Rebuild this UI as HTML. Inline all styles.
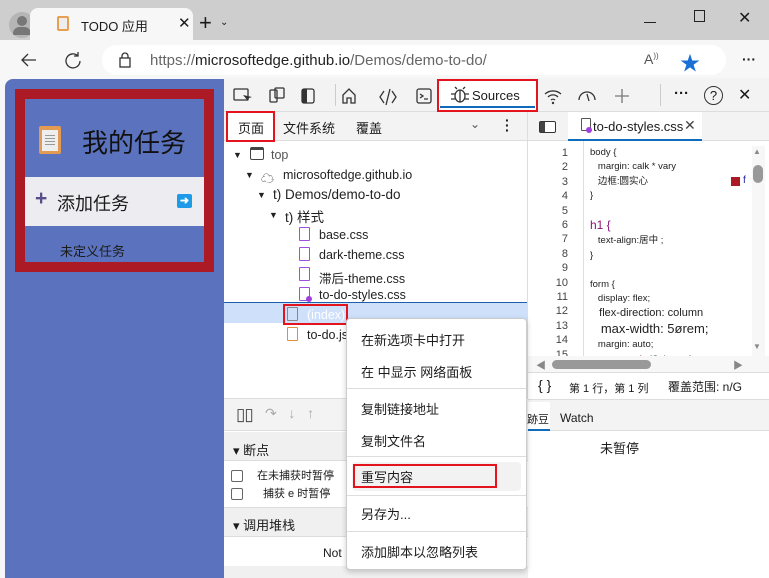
<!DOCTYPE html>
<html><head><meta charset="utf-8"><style>
*{margin:0;padding:0;box-sizing:border-box}
body{width:769px;height:578px;overflow:hidden;background:#f7f7f7;font-family:"Liberation Sans","Noto Sans CJK SC",sans-serif;position:relative;font-size:12px;color:#1b1b1b}
.a{position:absolute}
.ic{stroke:#333;fill:none;stroke-width:1.3}
</style></head><body>
<!-- title bar -->
<div class="a" style="left:0;top:0;width:769px;height:40px;background:#cecece"></div>
<div class="a" style="left:9px;top:12px;width:26px;height:26px;border-radius:50%;background:#b5b5b5"></div>
<div class="a" style="left:17px;top:16px;width:10px;height:10px;border-radius:50%;background:#777"></div>
<div class="a" style="left:13px;top:27px;width:18px;height:8px;border-radius:9px 9px 2px 2px;background:#777"></div>
<div class="a" style="left:30px;top:8px;width:163px;height:34px;background:#f7f7f7;border-radius:8px 8px 0 0"></div>
<div class="a" style="left:57px;top:16px;width:12px;height:15px;background:#e8a050;border-radius:2px"></div>
<div class="a" style="left:59px;top:18px;width:8px;height:11px;background:#eee"></div>
<div class="a" style="left:81px;top:16px;font-size:13px">TODO 应用</div>
<div class="a" style="left:178px;top:14px;font-size:15px">✕</div>
<div class="a" style="left:199px;top:10px;font-size:22px;font-weight:300">+</div>
<div class="a" style="left:220px;top:17px;font-size:10px">⌄</div>
<div class="a" style="left:644px;top:22px;width:12px;height:1.3px;background:#222"></div>
<div class="a" style="left:694px;top:10px;width:11px;height:12px;border:1.3px solid #222"></div>
<div class="a" style="left:738px;top:8px;font-size:16px">✕</div>
<!-- address -->
<svg class="a" style="left:18px;top:50px" width="22" height="20"><path d="M18 10H4M10 4L4 10l6 6" class="ic" stroke-width="1.6"/></svg>
<svg class="a" style="left:63px;top:50px" width="20" height="20"><path d="M15 6A7 7 0 1 0 17 11M15 2v4h-4" class="ic" stroke-width="1.5"/></svg>
<div class="a" style="left:102px;top:45px;width:624px;height:30px;background:#fff;border-radius:15px"></div>
<svg class="a" style="left:118px;top:52px" width="14" height="16"><rect x="2" y="6" width="10" height="9" class="ic"/><path d="M4 6V4a3 3 0 0 1 6 0v2" class="ic"/></svg>
<div class="a" style="left:150px;top:52px;font-size:15px;color:#666">https://<span style="color:#222">microsoftedge.github.io</span>/Demos/demo-to-do/</div>
<div class="a" style="left:644px;top:51px;font-size:14px;color:#555">A<sup style="font-size:8px">))</sup></div>
<div class="a" style="left:680px;top:47px;font-size:20px;color:#1a6fd6">★</div>
<div class="a" style="left:742px;top:51px;font-size:14px;font-weight:bold">···</div>
<!-- left webpage -->
<div class="a" style="left:5px;top:79px;width:219px;height:499px;background:#5b73be;border-radius:8px 0 0 0"></div>
<div class="a" style="left:15px;top:89px;width:199px;height:183px;border:10px solid #ab1a25"></div>
<div class="a" style="left:39px;top:126px;width:22px;height:28px;background:#e39a52;border-radius:2px"></div>
<div class="a" style="left:42px;top:130px;width:16px;height:21px;background:#eee"></div>
<div class="a" style="left:45px;top:135px;width:10px;height:12px;background:repeating-linear-gradient(#999 0 1px,transparent 1px 3px)"></div>
<div class="a" style="left:82px;top:123px;font-size:26px;color:#111">我的任务</div>
<div class="a" style="left:25px;top:177px;width:179px;height:49px;background:#ececf1"></div>
<div class="a" style="left:35px;top:187px;font-size:21px;color:#5a4e8a;font-weight:bold">+</div>
<div class="a" style="left:57px;top:190px;font-size:18px">添加任务</div>
<div class="a" style="left:177px;top:194px;width:15px;height:14px;background:#1d9ae8;border-radius:2px;color:#fff;font-size:11px;line-height:14px;text-align:center;font-weight:bold">➜</div>
<div class="a" style="left:60px;top:241px;font-size:13px">未定义任务</div>
<!-- devtools -->
<div class="a" style="left:224px;top:78px;width:545px;height:500px;background:#fff"></div>
<div class="a" style="left:224px;top:78px;width:545px;height:34px;background:#f3f3f3;border-bottom:1px solid #ddd"></div>
<svg class="a" style="left:232px;top:86px" width="220" height="20">
<rect x="2" y="3" width="14" height="11" rx="1" class="ic"/><path d="M11 9l5 6 1-3 3-1z" fill="#333"/>
<rect x="38" y="4" width="7" height="12" rx="1" class="ic"/><rect x="43" y="2" width="9" height="10" rx="1" class="ic"/>
<rect x="70" y="3" width="12" height="14" rx="2" class="ic"/><rect x="70" y="3" width="5" height="14" fill="#333"/>
<path d="M111 17V9l6-6 6 6v8h-4v-5h-4v5z" class="ic"/>
<path d="M152 5l-4 6 4 6M160 5l4 6-4 6M158 3l-4 16" class="ic"/>
<rect x="185" y="3" width="14" height="14" rx="2" class="ic"/><path d="M188 8l3 2-3 2M192 13h4" class="ic"/>
</svg>
<div class="a" style="left:335px;top:84px;width:1px;height:22px;background:#ccc"></div>
<div class="a" style="left:437px;top:79px;width:101px;height:33px;border:2px solid #e3141d;background:#fff"></div>
<div class="a" style="left:440px;top:106px;width:95px;height:2px;background:#0f6cbd"></div>
<svg class="a" style="left:450px;top:85px" width="20" height="20"><ellipse cx="10" cy="11" rx="5" ry="6" class="ic"/><path d="M5 9H1M5 14H1M15 9h4M15 14h4M7 4l-2-2M13 4l2-2M10 5v12" class="ic"/></svg>
<div class="a" style="left:472px;top:88px;font-size:13px">Sources</div>
<svg class="a" style="left:543px;top:86px" width="90" height="20"><path d="M2 8a12 12 0 0 1 16 0M5 11a7 7 0 0 1 10 0M8 14a3 3 0 0 1 4 0" class="ic"/><circle cx="10" cy="17" r="1.2" fill="#333"/>
<path d="M36 14a8 8 0 0 1 16 0M44 8l2 7" class="ic"/>
<path d="M79 3v14M72 10h14" stroke="#777" stroke-width="1.3"/></svg>
<div class="a" style="left:660px;top:84px;width:1px;height:22px;background:#ccc"></div>
<div class="a" style="left:674px;top:85px;font-size:15px;font-weight:bold">···</div>
<div class="a" style="left:704px;top:86px;width:19px;height:19px;border:1.4px solid #333;border-radius:50%;text-align:center;font-size:13px;line-height:17px">?</div>
<div class="a" style="left:738px;top:85px;font-size:16px">✕</div>
<!-- row 2 -->
<div class="a" style="left:224px;top:112px;width:303px;height:29px;background:#f3f3f3;border-bottom:1px solid #ddd"></div>
<div class="a" style="left:226px;top:111px;width:49px;height:31px;border:2px solid #e3141d;background:#fff"></div>
<div class="a" style="left:238px;top:118px;font-size:13px">页面</div>
<div class="a" style="left:283px;top:118px;font-size:13px">文件系统</div>
<div class="a" style="left:356px;top:118px;font-size:13px">覆盖</div>
<div class="a" style="left:470px;top:117px;font-size:12px;color:#555">⌄</div>
<div class="a" style="left:505px;top:118px;font-size:14px;font-weight:bold;line-height:5px;width:4px">·<br>·<br>·</div>
<div class="a" style="left:527px;top:112px;width:1px;height:290px;background:#ddd"></div>
<div class="a" style="left:528px;top:112px;width:241px;height:29px;background:#f3f3f3;border-bottom:1px solid #ddd"></div>
<div class="a" style="left:539px;top:121px;width:17px;height:12px;border:1.3px solid #333;border-radius:2px;background:linear-gradient(90deg,#444 5px,#fff 5px)"></div>
<div class="a" style="left:568px;top:112px;width:134px;height:29px;background:#fff;border-bottom:2px solid #0f6cbd"></div>
<div class="a" style="left:581px;top:118px;width:10px;height:13px;border:1.2px solid #555;border-radius:1px"></div>
<div class="a" style="left:586px;top:127px;width:6px;height:6px;border-radius:50%;background:#a23ee0"></div>
<div class="a" style="left:593px;top:119px;font-size:13px">to-do-styles.css</div>
<div class="a" style="left:684px;top:117px;font-size:14px;color:#444">✕</div>
<!-- tree -->
<div class="a" style="left:224px;top:302px;width:303px;height:21px;background:#cfe0fb;border-top:1px solid #1b5fa8"></div>
<div style="font-size:12.5px;color:#222">
<div class="a" style="left:233px;top:150px;font-size:9px">▼</div><div class="a" style="left:250px;top:147px;width:14px;height:13px;border:1.3px solid #444;border-top-width:3px;border-radius:2px"></div><div class="a" style="left:271px;top:148px;color:#555">top</div>
<div class="a" style="left:245px;top:170px;font-size:9px">▼</div><div class="a" style="left:261px;top:168px;font-size:13px;color:#444">☁</div><div class="a" style="left:283px;top:168px">microsoftedge.github.io</div>
<div class="a" style="left:257px;top:190px;font-size:9px">▼</div><div class="a" style="left:273px;top:187px;font-size:13.5px">t) Demos/demo-to-do</div>
<div class="a" style="left:269px;top:210px;font-size:9px">▼</div><div class="a" style="left:285px;top:206px;font-size:13.5px">t) 样式</div>
<div class="a" style="left:299px;top:227px;width:11px;height:14px;border:1.3px solid #a04fd9;border-radius:1px"></div><div class="a" style="left:319px;top:228px">base.css</div>
<div class="a" style="left:299px;top:247px;width:11px;height:14px;border:1.3px solid #a04fd9;border-radius:1px"></div><div class="a" style="left:319px;top:248px">dark-theme.css</div>
<div class="a" style="left:299px;top:267px;width:11px;height:14px;border:1.3px solid #a04fd9;border-radius:1px"></div><div class="a" style="left:319px;top:268px">滞后-theme.css</div>
<div class="a" style="left:299px;top:287px;width:11px;height:14px;border:1.3px solid #a04fd9;border-radius:1px"></div><div class="a" style="left:306px;top:296px;width:6px;height:6px;border-radius:50%;background:#a23ee0"></div><div class="a" style="left:319px;top:288px">to-do-styles.css</div>
<div class="a" style="left:283px;top:304px;width:65px;height:21px;border:2px solid #e3141d"></div>
<div class="a" style="left:287px;top:307px;width:11px;height:14px;border:1.3px solid #888;border-radius:1px"></div><div class="a" style="left:307px;top:308px;color:#fff">(index)</div>
<div class="a" style="left:287px;top:327px;width:11px;height:14px;border:1.3px solid #e0903a;border-radius:1px"></div><div class="a" style="left:307px;top:328px">to-do.js</div>
</div>
<!-- debugger -->
<div class="a" style="left:224px;top:398px;width:304px;height:33px;background:#f3f3f3;border-top:1px solid #ddd;border-bottom:1px solid #ddd"></div>
<div class="a" style="left:236px;top:405px;font-size:17px;color:#444;letter-spacing:-1px">▯▯</div>
<div class="a" style="left:265px;top:405px;font-size:14px;color:#aaa">↷ &nbsp; ↓ &nbsp; ↑</div>
<div class="a" style="left:224px;top:432px;width:304px;height:29px;background:#f0f0f0;border-bottom:1px solid #ddd"></div>
<div class="a" style="left:233px;top:440px;font-size:13px">▾ 断点</div>
<div class="a" style="left:231px;top:470px;width:12px;height:12px;border:1px solid #666;border-radius:2px;background:#fff"></div>
<div class="a" style="left:257px;top:467px;font-size:11px">在未捕获时暂停</div>
<div class="a" style="left:231px;top:488px;width:12px;height:12px;border:1px solid #666;border-radius:2px;background:#fff"></div>
<div class="a" style="left:263px;top:485px;font-size:11px">捕获 e 时暂停</div>
<div class="a" style="left:224px;top:507px;width:304px;height:30px;background:#f0f0f0;border-top:1px solid #ddd;border-bottom:1px solid #ddd"></div>
<div class="a" style="left:233px;top:515px;font-size:13px">▾ 调用堆栈</div>
<div class="a" style="left:323px;top:546px;font-size:12px">Not</div>
<div class="a" style="left:224px;top:566px;width:304px;height:12px;background:#f0f0f0"></div>
<!-- editor -->
<div class="a" style="left:528px;top:141px;width:224px;height:215px;overflow:hidden">
<div class="a" style="left:55px;top:0;width:1px;height:215px;background:#dde"></div>
<div class="a" style="left:20px;top:5px;font-size:11px;line-height:14.4px;color:#444;text-align:right;width:20px">1<br>2<br>3<br>4<br>5<br>6<br>7<br>8<br>9<br>10<br>11<br>12<br>13<br>14<br>15</div>
<div class="a" style="left:62px;top:5px;font-size:9.5px;line-height:14.4px;color:#222;white-space:pre">body {
   margin: calk * vary
   边框:圆实心
}

<span style="font-size:12px;color:#881280">h1 {</span>
   text-align:居中 ;
}

form {
   display: flex;
<span style="font-size:11px">   flex-direction: column</span>
<span style="font-size:13px">   max-width: 5ørem;</span>
   margin: auto;
<span style="font-size:12px">   gap: <span style="color:#881280">calc</span>(2 * <span style="color:#881280">var</span>(--sp</span></div>
<div class="a" style="left:203px;top:36px;width:9px;height:9px;background:#ab1a25"></div>
<div class="a" style="left:215px;top:34px;font-size:10px;color:#1a1aa6">f</div>
</div>
<div class="a" style="left:752px;top:146px;width:13px;height:210px;background:#f7f7f7"></div>
<div class="a" style="left:753px;top:165px;width:10px;height:18px;border-radius:5px;background:#999"></div>
<div class="a" style="left:753px;top:147px;font-size:8px;color:#888">▲</div>
<div class="a" style="left:753px;top:342px;font-size:8px;color:#888">▼</div>
<div class="a" style="left:528px;top:356px;width:241px;height:16px;background:#f7f7f7"></div>
<div class="a" style="left:552px;top:360px;width:99px;height:9px;border-radius:5px;background:#999"></div>
<div class="a" style="left:536px;top:357px;font-size:10px;color:#888">◀</div>
<div class="a" style="left:733px;top:357px;font-size:10px;color:#888">▶</div>
<div class="a" style="left:528px;top:372px;width:241px;height:28px;background:#fff;border-top:1px solid #ddd;border-bottom:1px solid #ddd"></div>
<div class="a" style="left:538px;top:377px;font-size:14px">{ }</div>
<div class="a" style="left:569px;top:380px;font-size:11px">第 1 行，第 1 列</div>
<div class="a" style="left:668px;top:378px;font-size:12px">覆盖范围: n/G</div>
<div class="a" style="left:528px;top:400px;width:241px;height:31px;background:#f3f3f3;border-bottom:1px solid #ddd"></div>
<div class="a" style="left:528px;top:402px;width:22px;height:29px;background:#fff;border-bottom:2px solid #0f6cbd"></div>
<div class="a" style="left:527px;top:411px;font-size:11px">跡豆</div>
<div class="a" style="left:560px;top:411px;font-size:12px">Watch</div>
<div class="a" style="left:600px;top:438px;font-size:13px">未暂停</div>
<!-- context menu -->
<div class="a" style="left:346px;top:318px;width:181px;height:252px;background:#fff;border:1px solid #ccc;border-radius:4px;box-shadow:0 2px 6px rgba(0,0,0,.2)"></div>
<div style="font-size:13px">
<div class="a" style="left:361px;top:330px">在新选项卡中打开</div>
<div class="a" style="left:361px;top:362px">在 中显示 网络面板</div>
<div class="a" style="left:347px;top:388px;width:179px;height:1px;background:#ddd"></div>
<div class="a" style="left:361px;top:399px">复制链接地址</div>
<div class="a" style="left:361px;top:431px">复制文件名</div>
<div class="a" style="left:347px;top:456px;width:179px;height:1px;background:#ddd"></div>
<div class="a" style="left:352px;top:462px;width:169px;height:29px;background:#f2f2f2;border-radius:4px"></div>
<div class="a" style="left:353px;top:464px;width:144px;height:24px;border:2px solid #e3141d"></div>
<div class="a" style="left:361px;top:467px">重写内容</div>
<div class="a" style="left:347px;top:495px;width:179px;height:1px;background:#ddd"></div>
<div class="a" style="left:361px;top:504px">另存为...</div>
<div class="a" style="left:347px;top:531px;width:179px;height:1px;background:#ddd"></div>
<div class="a" style="left:361px;top:542px">添加脚本以忽略列表</div>
</div>
</body></html>
